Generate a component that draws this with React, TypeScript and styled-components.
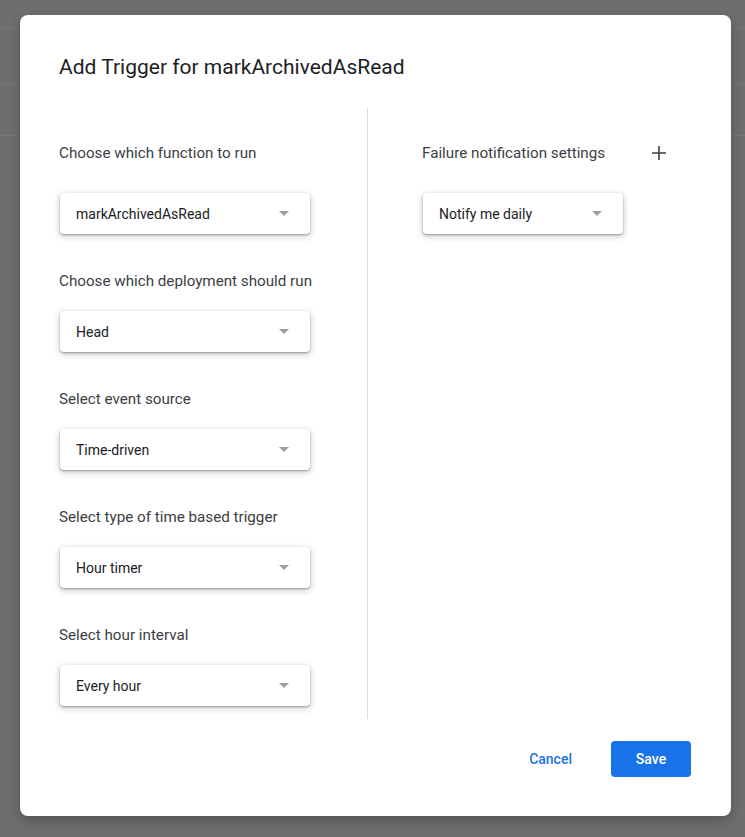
import React, { FC } from 'react';
import styled, { createGlobalStyle } from 'styled-components';

const GlobalStyle = createGlobalStyle`
  html, body {
    margin: 0;
    padding: 0;
    background: #6e6e6e;
    font-family: Roboto, "Liberation Sans", Arial, sans-serif;
  }
`;

const Backdrop = styled.div`
  width: 745px;
  height: 837px;
  background: #6e6e6e;
  position: relative;
  overflow: hidden;
`;

const BackRow = styled.div<{ h: number }>`
  height: ${p => p.h}px;
  border-bottom: 1px solid #787878;
`;

const Dialog = styled.div`
  position: absolute;
  left: 20px;
  top: 15px;
  width: 711px;
  height: 801px;
  box-sizing: border-box;
  background: #fff;
  border-radius: 8px;
  padding: 0 40px 39px 39px;
  display: flex;
  flex-direction: column;
  box-shadow: 0 4px 12px rgba(0, 0, 0, 0.25);
`;

const Title = styled.h1`
  margin: 38px 0 0;
  font-size: 21px;
  line-height: 28px;
  font-weight: 400;
  color: #202124;
`;

const Body = styled.div`
  margin-top: 27px;
  flex: 1;
  display: grid;
  grid-template-columns: 308px 1px 1fr;
  margin-bottom: 22px;
`;

const Divider = styled.div`
  background: #dadce0;
`;

const Column = styled.div<{ inset: number }>`
  padding-top: 35px;
  padding-left: ${p => p.inset}px;
  display: flex;
  flex-direction: column;
  gap: 37px;
`;

const Field = styled.div<{ first?: boolean }>`
  display: flex;
  flex-direction: column;
  gap: ${p => (p.first ? 30 : 20)}px;
`;

const LabelRow = styled.div`
  display: flex;
  align-items: center;
  justify-content: space-between;
  width: 244px;
`;

const Label = styled.div`
  font-size: 15.2px;
  line-height: 20px;
  color: #3c4043;
`;

const PlusButton = styled.button`
  border: none;
  background: none;
  padding: 0;
  width: 14px;
  height: 20px;
  display: flex;
  align-items: center;
  justify-content: center;
  cursor: pointer;
`;

const Select = styled.div<{ w: number }>`
  width: ${p => p.w}px;
  height: 41px;
  margin-left: 1px;
  box-sizing: border-box;
  border-radius: 4px;
  background: #fff;
  box-shadow: 0 1px 2px rgba(0, 0, 0, 0.3), 0 2px 6px 1px rgba(0, 0, 0, 0.18);
  display: flex;
  align-items: center;
  justify-content: space-between;
  padding: 0 21px 0 16px;
  font-size: 14px;
  color: #202124;
`;

const Arrow = styled.span`
  width: 0;
  height: 0;
  border-left: 5px solid transparent;
  border-right: 5px solid transparent;
  border-top: 5px solid #9aa0a6;
`;

const Footer = styled.div`
  display: flex;
  justify-content: flex-end;
  align-items: center;
  gap: 24px;
`;

const TextButton = styled.button`
  border: none;
  background: none;
  height: 36px;
  padding: 0 15px;
  font-family: inherit;
  font-size: 14px;
  font-weight: 500;
  color: #1a73e8;
  cursor: pointer;
`;

const PrimaryButton = styled.button`
  border: none;
  background: #1a73e8;
  height: 36px;
  width: 80px;
  border-radius: 4px;
  font-family: inherit;
  font-size: 14px;
  font-weight: 500;
  color: #fff;
  cursor: pointer;
`;

const leftFields = [
  { label: 'Choose which function to run', value: 'markArchivedAsRead' },
  { label: 'Choose which deployment should run', value: 'Head' },
  { label: 'Select event source', value: 'Time-driven' },
  { label: 'Select type of time based trigger', value: 'Hour timer' },
  { label: 'Select hour interval', value: 'Every hour' },
];

const App: FC = () => (
  <>
    <GlobalStyle />
    <Backdrop>
      <BackRow h={28} />
      <BackRow h={55} />
      <BackRow h={50} />
      <Dialog>
        <Title>Add Trigger for markArchivedAsRead</Title>
        <Body>
          <Column inset={0}>
            {leftFields.map((f, i) => (
              <Field key={f.label} first={i === 0}>
                <Label>{f.label}</Label>
                <Select w={250}>
                  {f.value}
                  <Arrow />
                </Select>
              </Field>
            ))}
          </Column>
          <Divider />
          <Column inset={54}>
            <Field first>
              <LabelRow>
                <Label>Failure notification settings</Label>
                <PlusButton aria-label="Add">
                  <svg width="14" height="14" viewBox="0 0 14 14">
                    <path d="M7 0v14M0 7h14" stroke="#3c4043" strokeWidth="1.6" />
                  </svg>
                </PlusButton>
              </LabelRow>
              <Select w={200}>
                Notify me daily
                <Arrow />
              </Select>
            </Field>
          </Column>
        </Body>
        <Footer>
          <TextButton>Cancel</TextButton>
          <PrimaryButton>Save</PrimaryButton>
        </Footer>
      </Dialog>
    </Backdrop>
  </>
);

export default App;
